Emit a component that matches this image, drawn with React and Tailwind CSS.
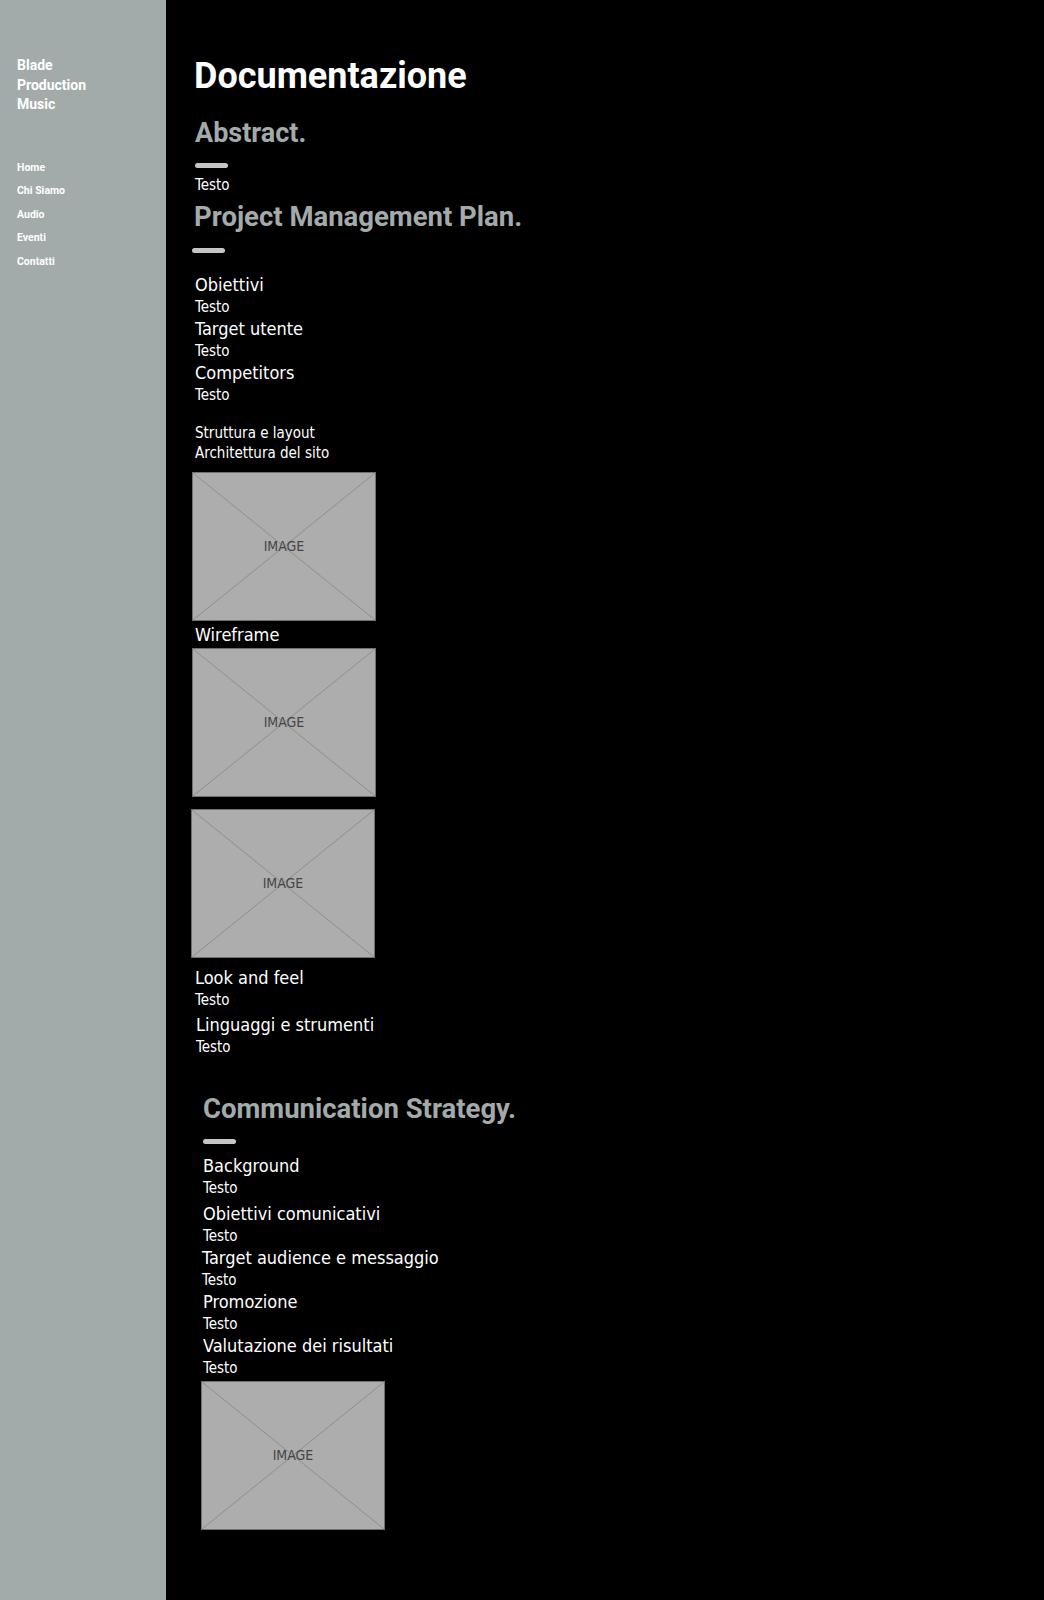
import React from "react";

const roboto = { fontFamily: "Roboto, 'Liberation Sans', sans-serif" };
const narrow = { fontFamily: "'DejaVu Sans Condensed', 'Liberation Sans Narrow', 'Liberation Sans', sans-serif" };

const nav = ["Home", "Chi Siamo", "Audio", "Eventi", "Contatti"];

const Bar = ({ className = "" }) => (
  <div className={`h-[5px] w-[33px] rounded-full bg-[#c3c6c6] ${className}`} />
);

const Heading = ({ children, className = "" }) => (
  <h3 className={`text-[18px] leading-[22px] text-white ${className}`} style={narrow}>
    {children}
  </h3>
);

const Testo = ({ className = "" }) => (
  <p className={`text-[15px] leading-[22px] text-white ${className}`} style={narrow}>
    Testo
  </p>
);

const Placeholder = ({ className = "" }) => (
  <div className={`relative flex h-[149px] w-[184px] items-center justify-center border border-[#707070] bg-[#adadad] ${className}`}>
    <svg className="absolute inset-0 h-full w-full" viewBox="0 0 184 149" preserveAspectRatio="none">
      <line x1="0" y1="0" x2="184" y2="149" stroke="#858585" strokeWidth="0.8" />
      <line x1="184" y1="0" x2="0" y2="149" stroke="#858585" strokeWidth="0.8" />
    </svg>
    <span className="relative text-[14px] text-[#454545]" style={narrow}>IMAGE</span>
  </div>
);

export default function App() {
  return (
    <div className="flex min-h-[1600px] w-full bg-black">
      {/* Sidebar */}
      <aside className="w-[166px] shrink-0 bg-[#a3abaa] px-[17px] pt-[56px]" style={roboto}>
        <div className="text-[14px] font-bold leading-[19.5px] text-white">
          <div>Blade</div>
          <div>Production</div>
          <div>Music</div>
        </div>
        <ul className="mt-[41px] flex flex-col">
          {nav.map((item) => (
            <li key={item} className="text-[10.5px] font-bold leading-[23.5px] text-white">
              {item}
            </li>
          ))}
        </ul>
      </aside>

      {/* Main */}
      <main className="flex-1 pl-[28px] pt-[55px]">
        <h1 className="text-[36px] font-bold leading-[42px] text-white" style={roboto}>
          Documentazione
        </h1>

        <h2 className="ml-px mt-[20px] text-[27px] font-bold leading-[32px] text-[#a3abaa]" style={roboto}>
          Abstract.
        </h2>
        <Bar className="ml-px mt-[14px]" />
        <p className="ml-px mt-[7px] text-[15px] leading-[20px] text-white" style={narrow}>Testo</p>

        <h2 className="mt-[6px] text-[27.5px] font-bold leading-[32px] text-[#a3abaa]" style={roboto}>
          Project Management Plan.
        </h2>
        <Bar className="-ml-[2px] mt-[15px]" />

        <Heading className="ml-px mt-[21px]">Obiettivi</Heading>
        <Testo className="ml-px" />
        <Heading className="ml-px">Target utente</Heading>
        <Testo className="ml-px" />
        <Heading className="ml-px">Competitors</Heading>
        <Testo className="ml-px" />

        <div className="ml-px mt-[17px] text-[15px] leading-[20px] text-white" style={narrow}>
          <p>Struttura e layout</p>
          <p>Architettura del sito</p>
        </div>

        <Placeholder className="-ml-[2px] mt-[9px]" />
        <Heading className="ml-px mt-[2px] leading-[24px]">Wireframe</Heading>
        <Placeholder className="-ml-[2px] mt-px" />
        <Placeholder className="-ml-[3px] mt-[12px]" />

        <Heading className="ml-px mt-[9px]">Look and feel</Heading>
        <Testo className="ml-px" />
        <Heading className="ml-[2px] mt-[3px]">Linguaggi e strumenti</Heading>
        <Testo className="ml-[2px]" />

        <section className="ml-[9px] mt-[35px]">
          <h2 className="text-[27.5px] font-bold leading-[32px] text-[#a3abaa]" style={roboto}>
            Communication Strategy.
          </h2>
          <Bar className="mt-[14px]" />
          <Heading className="mt-[11px]">Background</Heading>
          <Testo />
          <Heading className="mt-[4px]">Obiettivi comunicativi</Heading>
          <Testo className="leading-[21px]" />
          <Heading className="-ml-px">Target audience e messaggio</Heading>
          <Testo className="-ml-px leading-[21px]" />
          <Heading>Promozione</Heading>
          <Testo className="leading-[21px]" />
          <Heading>Valutazione dei risultati</Heading>
          <Testo className="leading-[20px]" />
          <Placeholder className="-ml-[2px] mt-[2px]" />
        </section>
      </main>
    </div>
  );
}
